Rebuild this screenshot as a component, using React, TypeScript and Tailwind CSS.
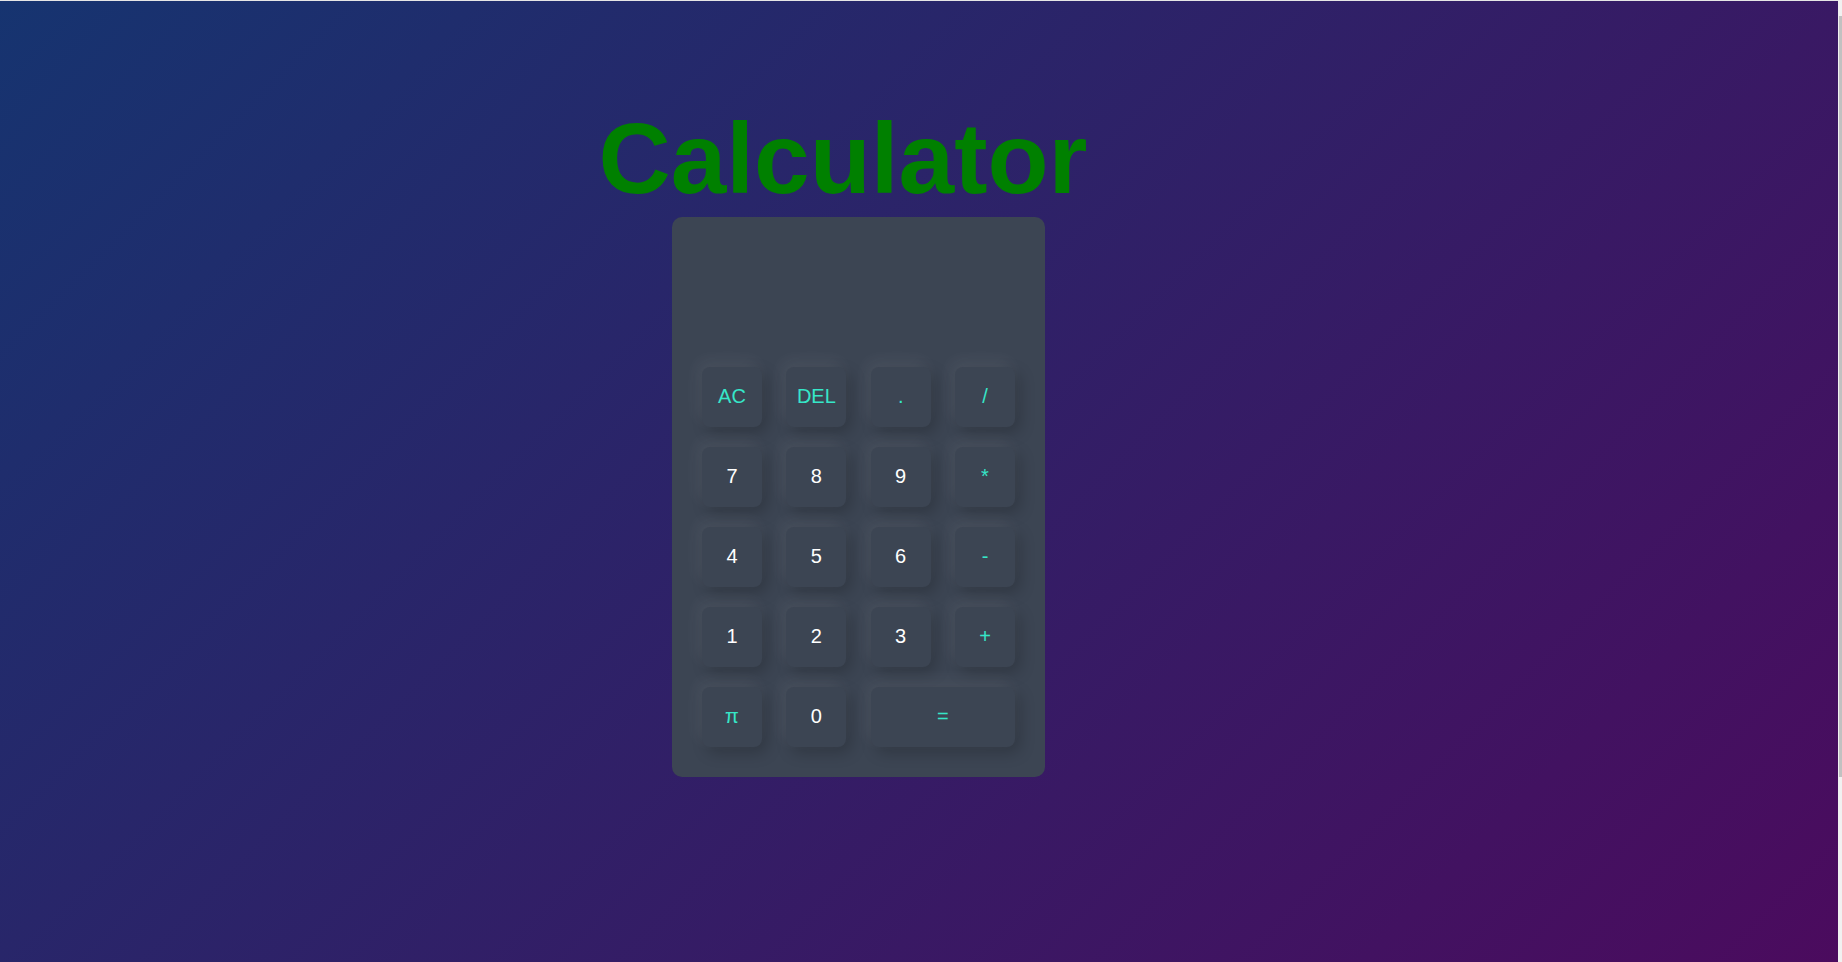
import React from 'react';

type Key = { label: string; accent?: boolean; wide?: boolean };

const keys: Key[] = [
  { label: 'AC', accent: true },
  { label: 'DEL', accent: true },
  { label: '.', accent: true },
  { label: '/', accent: true },
  { label: '7' },
  { label: '8' },
  { label: '9' },
  { label: '*', accent: true },
  { label: '4' },
  { label: '5' },
  { label: '6' },
  { label: '-', accent: true },
  { label: '1' },
  { label: '2' },
  { label: '3' },
  { label: '+', accent: true },
  { label: 'π', accent: true },
  { label: '0' },
  { label: '=', accent: true, wide: true },
];

export default function App() {
  return (
    <div className="flex h-screen w-full overflow-hidden font-['Liberation_Sans',Arial,sans-serif]">
      <main className="flex-1 border-t border-[#e6e6e6] bg-[linear-gradient(135deg,#163470,#4b0b5e)]">
        <div className="flex flex-col items-center pt-[100px] mr-[121px]">
          <h1 className="text-[100px] font-bold leading-[normal] text-[#008000] mr-[31px] mb-px">Calculator</h1>

          <div className="w-[373px] rounded-[10px] bg-[#3c4553] px-[30px] pb-[30px]">
            {/* display */}
            <div className="h-[150px]" />

            <div className="grid grid-cols-[repeat(4,60px)] justify-between gap-y-5">
              {keys.map((k) => (
                <button
                  key={k.label}
                  className={
                    'h-[60px] rounded-lg bg-[#3c4553] pb-[2px] text-[20px] shadow-[-4px_-6px_16px_rgba(255,255,255,0.07),5px_6px_16px_rgba(0,0,0,0.2)] ' +
                    (k.accent ? 'text-[#36e6c8] ' : 'text-white ') +
                    (k.wide ? 'col-span-2' : '')
                  }
                >
                  {k.label}
                </button>
              ))}
            </div>
          </div>
        </div>
      </main>

      {/* scrollbar strip */}
      <aside className="flex w-[4px] flex-col bg-[#f1f1f1] pt-4 pb-[185px] pl-px">
        <div className="flex-1 bg-[#c1c1c1]" />
      </aside>
    </div>
  );
}
